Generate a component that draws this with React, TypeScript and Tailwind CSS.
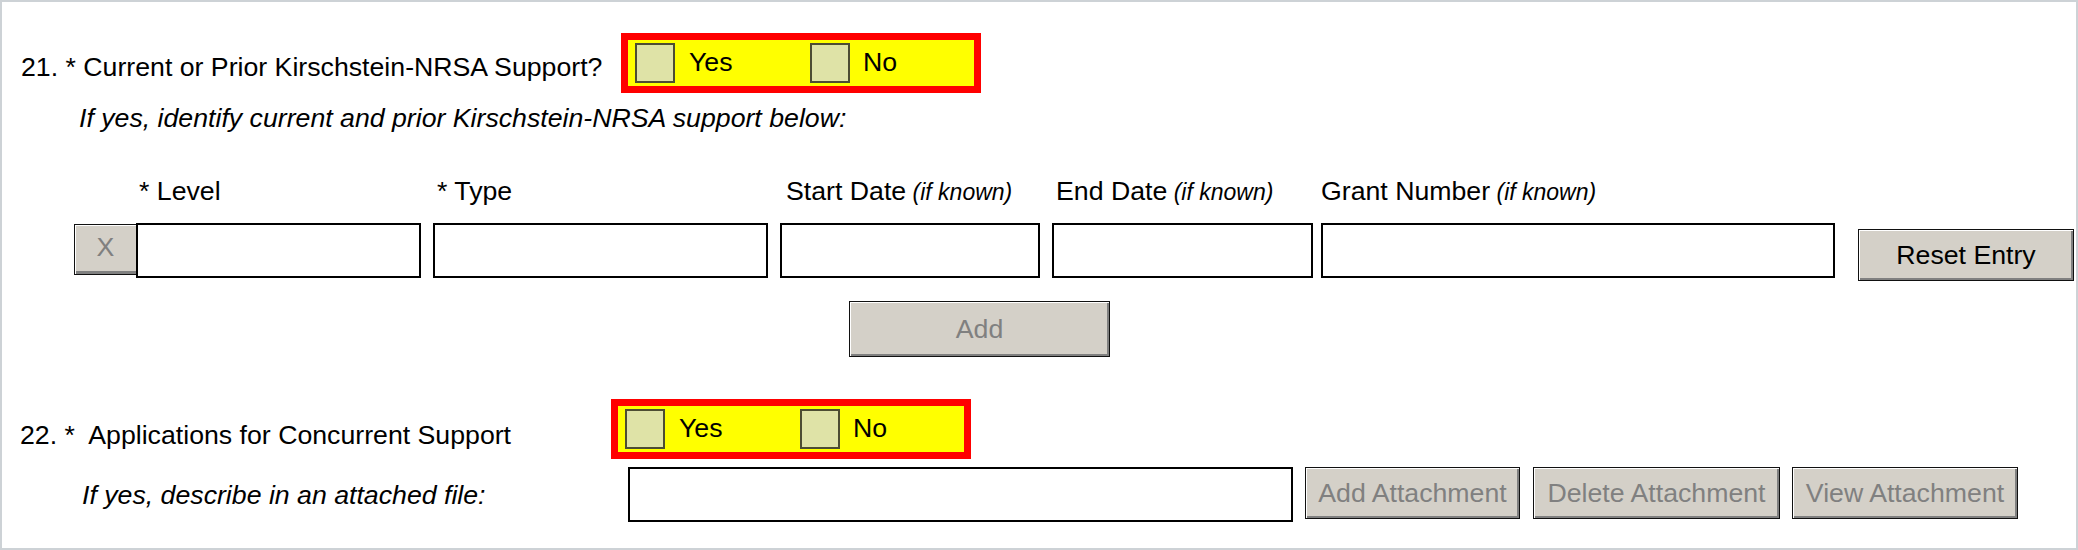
const btn =
  "bg-[#d4d0c8] border border-[#111] shadow-[inset_1px_1px_0_#ffffff,inset_-2px_-2px_0_#808080] flex items-center justify-center leading-none"

function YesNo() {
  return (
    <div className="w-[360px] h-[60px] border-[7px] border-[#ff0000] bg-[#ffff00] flex items-center pl-[7px]">
      <span className="w-[40px] h-[40px] border-2 border-[#4d4d33] bg-[#dfe3a7]" />
      <span className="ml-[14px] w-[121px] -mt-[2px]">Yes</span>
      <span className="w-[40px] h-[40px] border-2 border-[#4d4d33] bg-[#dfe3a7]" />
      <span className="ml-[13px] -mt-[2px]">No</span>
    </div>
  )
}

function Known() {
  return <i className="text-[23px]"> (if known)</i>
}

export default function App() {
  return (
    <div className="w-[2078px] h-[550px] border-2 border-[#cdd2d6] bg-white text-black text-[26.7px] font-['Liberation_Sans',Arial,sans-serif] overflow-hidden">
      {/* 21 */}
      <div className="flex items-start mt-[31px] pl-[19px]">
        <div className="w-[600px] pt-[19px] leading-[30px] whitespace-nowrap">21. * Current or Prior Kirschstein-NRSA Support?</div>
        <YesNo />
      </div>
      <div className="mt-[10px] pl-[77px] leading-[30px] italic">If yes, identify current and prior Kirschstein-NRSA support below:</div>

      {/* column labels */}
      <div className="flex mt-[43px] pl-[137px] leading-[30px] whitespace-nowrap items-baseline">
        <div className="w-[298px]">* Level</div>
        <div className="w-[349px]">* Type</div>
        <div className="w-[270px]">Start Date<Known /></div>
        <div className="w-[265px]">End Date<Known /></div>
        <div>Grant Number<Known /></div>
      </div>

      {/* entry row */}
      <div className="flex items-start mt-[16px] pl-[72px]">
        <button className="w-[62px] h-[51px] mt-[1px] bg-[#d4d0c8] border border-[#111] border-r-0 shadow-[inset_1px_1px_0_#ffffff,inset_0_-3px_0_#808080] text-[#808080] leading-none pb-[4px]">X</button>
        <div className="w-[285px] h-[55px] border-2 border-black bg-white" />
        <div className="w-[335px] h-[55px] border-2 border-black bg-white ml-[12px]" />
        <div className="w-[260px] h-[55px] border-2 border-black bg-white ml-[12px]" />
        <div className="w-[261px] h-[55px] border-2 border-black bg-white ml-[12px]" />
        <div className="w-[514px] h-[55px] border-2 border-black bg-white ml-[8px]" />
        <button className={`${btn} w-[216px] h-[52px] mt-[6px] ml-[23px]`}>Reset Entry</button>
      </div>
      <div className="flex mt-[20px] pl-[847px]">
        <button className={`${btn} w-[261px] h-[56px] text-[#808080]`}>Add</button>
      </div>

      {/* 22 */}
      <div className="flex items-start mt-[42px] pl-[18px]">
        <div className="w-[591px] pt-[21px] leading-[30px] whitespace-pre">22. *  Applications for Concurrent Support</div>
        <YesNo />
      </div>
      <div className="flex items-start mt-[8px] pl-[80px]">
        <div className="w-[546px] h-[55px] flex items-center italic leading-[30px]">If yes, describe in an attached file:</div>
        <div className="w-[665px] h-[55px] border-2 border-black bg-white" />
        <button className={`${btn} w-[215px] h-[52px] ml-[12px] text-[#808080]`}>Add Attachment</button>
        <button className={`${btn} w-[247px] h-[52px] ml-[13px] text-[#808080]`}>Delete Attachment</button>
        <button className={`${btn} w-[226px] h-[52px] ml-[12px] text-[#808080]`}>View Attachment</button>
      </div>
    </div>
  )
}
